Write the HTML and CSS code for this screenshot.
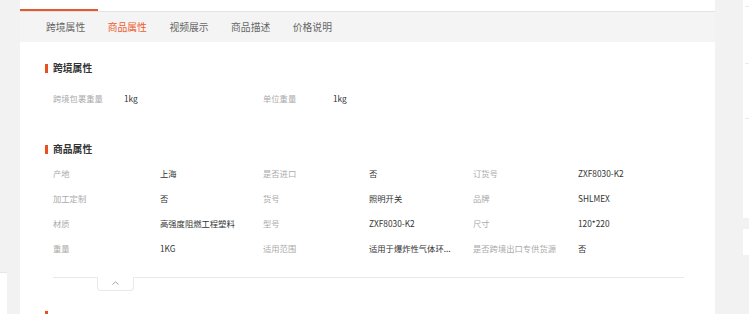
FILE: index.html
```html
<!DOCTYPE html>
<html lang="zh-CN">
<head>
    <meta charset="UTF-8">
    <meta name="viewport" content="width=device-width, initial-scale=1.0">
    <title>商品属性</title>
    <link rel="stylesheet" href="styles.css">
</head>
<body>
    <div class="page">
        <aside class="side-left">
            <div class="side-left-card"></div>
        </aside>

        <main class="panel">
            <div class="panel-top"></div>
            <div class="track"><div class="thumb"></div></div>
            <nav class="tabs">
                <span class="tab">跨境属性</span>
                <span class="tab active">商品属性</span>
                <span class="tab">视频展示</span>
                <span class="tab">商品描述</span>
                <span class="tab">价格说明</span>
            </nav>

            <div class="content">
                <section class="block">
                    <h2 class="block-title"><i class="bar"></i>跨境属性</h2>
                    <div class="attrs attrs-two">
                        <span class="label">跨境包裹重量</span>
                        <span class="value">1kg</span>
                        <span class="label">单位重量</span>
                        <span class="value">1kg</span>
                    </div>
                </section>

                <section class="block block-goods">
                    <h2 class="block-title"><i class="bar"></i>商品属性</h2>
                    <div class="attrs attrs-three">
                        <span class="label">产地</span>
                        <span class="value">上海</span>
                        <span class="label">是否进口</span>
                        <span class="value">否</span>
                        <span class="label">订货号</span>
                        <span class="value">ZXF8030-K2</span>

                        <span class="label">加工定制</span>
                        <span class="value">否</span>
                        <span class="label">货号</span>
                        <span class="value">照明开关</span>
                        <span class="label">品牌</span>
                        <span class="value">SHLMEX</span>

                        <span class="label">材质</span>
                        <span class="value">高强度阻燃工程塑料</span>
                        <span class="label">型号</span>
                        <span class="value">ZXF8030-K2</span>
                        <span class="label">尺寸</span>
                        <span class="value">120*220</span>

                        <span class="label">重量</span>
                        <span class="value">1KG</span>
                        <span class="label">适用范围</span>
                        <span class="value">适用于爆炸性气体环...</span>
                        <span class="label">是否跨境出口专供货源</span>
                        <span class="value">否</span>
                    </div>
                    <div class="fold">
                        <button class="fold-btn" type="button">
                            <svg width="7" height="4" viewBox="0 0 7 4"><polyline points="0.5,3.5 3.5,0.8 6.5,3.5" fill="none" stroke="#999" stroke-width="0.9"/></svg>
                        </button>
                    </div>
                </section>

                <section class="block block-next">
                    <i class="bar"></i>
                </section>
            </div>
        </main>

        <aside class="side-right">
            <div class="card card-big">
                <div class="card-line"></div>
                <div class="card-line line-2"></div>
                <div class="card-line line-3"></div>
            </div>
            <div class="card card-small"></div>
        </aside>
    </div>
</body>
</html>
```

FILE: styles.css
```css
* {
    box-sizing: border-box;
}

body {
    margin: 0;
    background-color: #f2f2f2;
    font-family: "Noto Sans CJK SC", "Noto Sans", sans-serif;
    color: #333;
    overflow: hidden;
}

.page {
    display: flex;
    height: 314px;
}

.side-left {
    width: 20px;
    flex-shrink: 0;
}

.side-left-card {
    width: 7px;
    height: 42px;
    margin-top: 272px;
    background: #fff;
    border-top: 1px solid #e6e6e6;
}

.panel {
    width: 695px;
    flex-shrink: 0;
    background: #fff;
}

.panel-top {
    height: 9px;
}

.track {
    height: 3px;
    border-bottom: 1px solid #e3e3e3;
}

.thumb {
    width: 78px;
    height: 2px;
    background: #e5582e;
}

.tabs {
    display: flex;
    align-items: center;
    gap: 22.5px;
    height: 30px;
    padding-left: 26px;
    background: #f4f4f4;
}

.tab {
    font-size: 9.8px;
    color: #666;
    line-height: 14px;
}

.tab.active {
    color: #ef5b2c;
}

.content {
    padding: 19px 31px 0 25px;
}

.block-title {
    display: flex;
    align-items: center;
    gap: 5px;
    margin: 0;
    height: 14px;
    font-size: 9.8px;
    font-weight: bold;
    color: #333;
}

.bar {
    display: block;
    width: 3px;
    height: 9px;
    background: #e8501f;
}

.attrs {
    display: grid;
    grid-auto-rows: 25px;
    align-items: center;
    padding-left: 8px;
    font-size: 8.3px;
}

.attrs-two {
    margin-top: 10px;
    grid-template-columns: 71px 139px 70px 1fr;
}

.attrs-three {
    margin-top: 4px;
    grid-template-columns: 107px 103px 106px 104px 105px 1fr;
}

.label {
    color: #aaa;
    white-space: nowrap;
}

.value {
    color: #333;
    white-space: nowrap;
}

.block-goods {
    margin-top: 32px;
}

.fold {
    margin: 17px 0 0 8px;
    border-top: 1px solid #e8e8e8;
}

.fold-btn {
    display: flex;
    align-items: center;
    justify-content: center;
    width: 37px;
    height: 14px;
    margin: -1px 0 0 44px;
    padding: 0 0 3px;
    background: #fff;
    border: 1px solid #e8e8e8;
    border-top-color: #fff;
    border-radius: 0 0 4px 4px;
}

.block-next {
    margin-top: 20px;
}

.side-right {
    flex: 1;
    padding-left: 28px;
}

.card {
    background: #fff;
}

.card-big {
    height: 218px;
    padding-top: 6px;
}

.card-line {
    margin-left: 2px;
    border-top: 1px solid #ececec;
}

.line-2 {
    margin-top: 56px;
}

.line-3 {
    margin-top: 54px;
}

.card-small {
    height: 26px;
    margin-top: 11px;
}
```
